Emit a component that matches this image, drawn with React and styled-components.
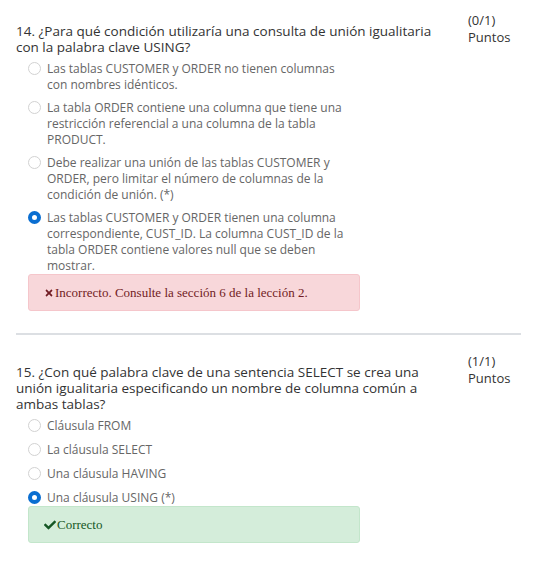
import styled, { createGlobalStyle } from "styled-components";
import { FaTimes, FaCheck } from "react-icons/fa";

const GlobalStyle = createGlobalStyle`
  body {
    margin: 0;
    background: #fff;
    font-family: "Open Sans", "DejaVu Sans", sans-serif;
  }
`;

const Page = styled.div`
  width: 535px;
  padding: 12px 0 0 16px;
  box-sizing: border-box;
`;

const QuestionWrapper = styled.section`
  display: flex;
  flex-direction: column;
`;

const Header = styled.div`
  display: flex;
  align-items: flex-start;
`;

const Title = styled.h3`
  margin: 11px 0 0;
  width: 440px;
  font-size: 13.5px;
  font-weight: normal;
  line-height: 16px;
  color: #333;
`;

const Points = styled.div`
  margin-left: 12px;
  display: flex;
  flex-direction: column;
  font-size: 13px;
  line-height: 17px;
  color: #333;
`;

const OptionList = styled.ul`
  list-style: none;
  margin: 6px 0 0 12px;
  padding: 0;
  width: 332px;
  display: flex;
  flex-direction: column;
  gap: ${(props) => props.gap}px;
`;

const OptionItem = styled.li`
  display: flex;
  align-items: flex-start;
  gap: 6px;
  padding-right: 8px;
`;

const Radio = styled.span`
  flex: none;
  width: 13px;
  height: 13px;
  margin-top: 1px;
  box-sizing: border-box;
  border-radius: 50%;
  border: ${(props) =>
    props.checked ? "4px solid #0a6ed1" : "1px solid #d2d2d2"};
  background: #fff;
`;

const OptionText = styled.span`
  font-size: 12px;
  line-height: 16px;
  color: #666;
`;

const Feedback = styled.div`
  margin: 0 0 0 12px;
  width: 332px;
  height: 37px;
  box-sizing: border-box;
  display: flex;
  align-items: center;
  gap: 1px;
  padding-left: 15px;
  border-radius: 3px;
  border: 1px solid ${(props) => (props.correct ? "#c3e6cb" : "#f5c6cb")};
  background: ${(props) => (props.correct ? "#d4edda" : "#f8d7da")};
  color: ${(props) => (props.correct ? "#155724" : "#721c24")};
  font-family: "Liberation Serif", "Times New Roman", serif;
  font-size: 13px;

  svg {
    flex: none;
    width: ${(props) => (props.correct ? 12 : 10)}px;
    height: ${(props) => (props.correct ? 12 : 10)}px;
  }
`;

const Divider = styled.hr`
  margin: 22px 0 18px;
  width: 505px;
  height: 2px;
  border: none;
  background: #dcdfe3;
`;

const questions = [
  {
    number: 14,
    title:
      "¿Para qué condición utilizaría una consulta de unión igualitaria con la palabra clave USING?",
    points: "(0/1)",
    gap: 7,
    options: [
      "Las tablas CUSTOMER y ORDER no tienen columnas con nombres idénticos.",
      "La tabla ORDER contiene una columna que tiene una restricción referencial a una columna de la tabla PRODUCT.",
      "Debe realizar una unión de las tablas CUSTOMER y ORDER, pero limitar el número de columnas de la condición de unión. (*)",
      "Las tablas CUSTOMER y ORDER tienen una columna correspondiente, CUST_ID. La columna CUST_ID de la tabla ORDER contiene valores null que se deben mostrar.",
    ],
    checked: 3,
    correct: false,
    feedback: "Incorrecto. Consulte la sección 6 de la lección 2.",
  },
  {
    number: 15,
    title:
      "¿Con qué palabra clave de una sentencia SELECT se crea una unión igualitaria especificando un nombre de columna común a ambas tablas?",
    points: "(1/1)",
    gap: 8,
    options: [
      "Cláusula FROM",
      "La cláusula SELECT",
      "Una cláusula HAVING",
      "Una cláusula USING (*)",
    ],
    checked: 3,
    correct: true,
    feedback: "Correcto",
  },
];

function Question({ q }) {
  return (
    <QuestionWrapper>
      <Header>
        <Title>{`${q.number}. ${q.title}`}</Title>
        <Points>
          <span>{q.points}</span>
          <span>Puntos</span>
        </Points>
      </Header>
      <OptionList gap={q.gap}>
        {q.options.map((opt, i) => (
          <OptionItem key={i}>
            <Radio checked={i === q.checked} />
            <OptionText>{opt}</OptionText>
          </OptionItem>
        ))}
      </OptionList>
      <Feedback correct={q.correct}>
        {q.correct ? <FaCheck /> : <FaTimes />}
        <span>{q.feedback}</span>
      </Feedback>
    </QuestionWrapper>
  );
}

export default function App() {
  return (
    <Page>
      <GlobalStyle />
      <Question q={questions[0]} />
      <Divider />
      <Question q={questions[1]} />
    </Page>
  );
}
